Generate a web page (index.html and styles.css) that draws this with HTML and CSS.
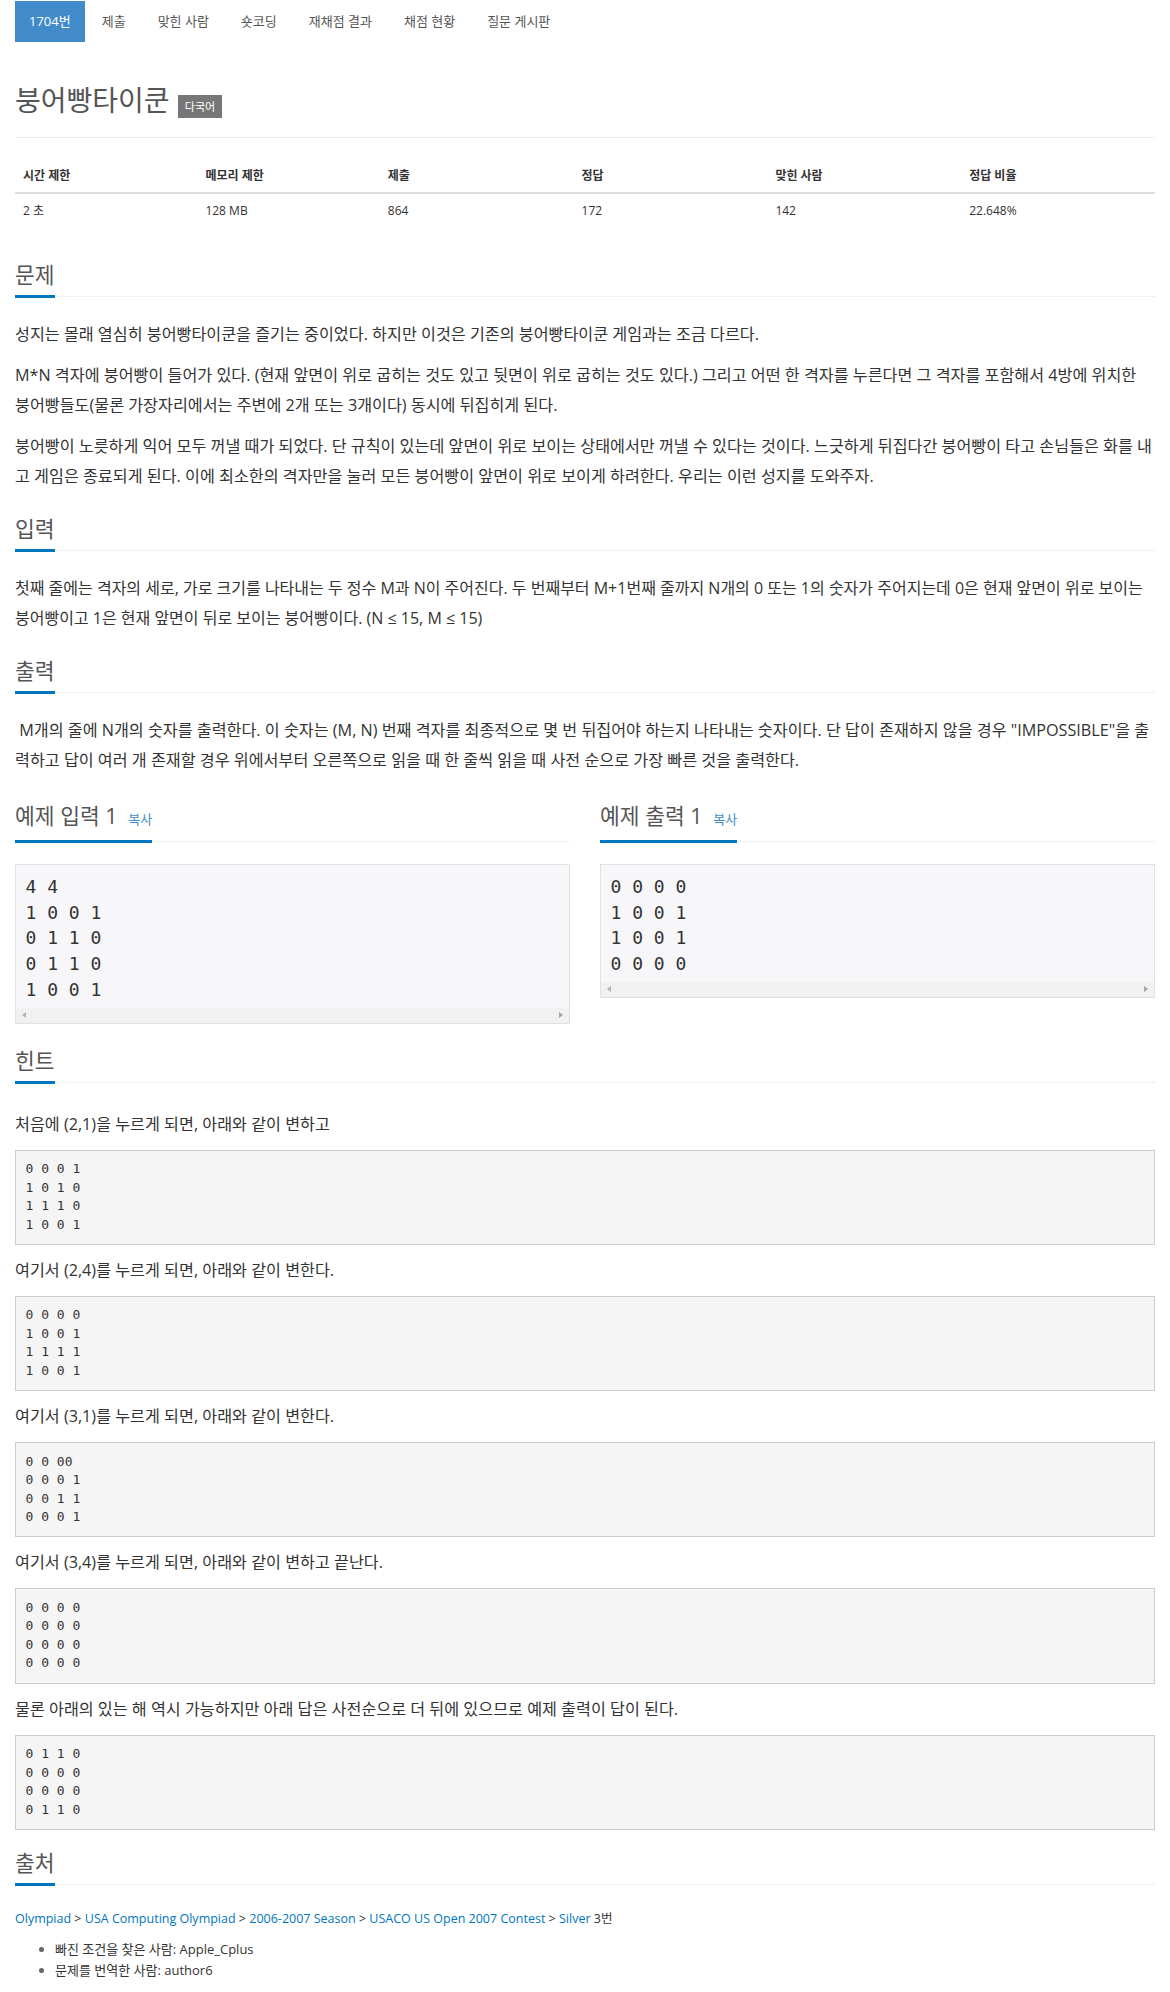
FILE: index.html
```html
<!DOCTYPE html>
<html lang="ko">
<head>
<meta charset="utf-8">
<title>1704번: 붕어빵타이쿤</title>
<link rel="stylesheet" href="styles.css">
</head>
<body>
<div class="container">
  <ul class="nav">
    <li class="active"><a>1704번</a></li>
    <li><a>제출</a></li>
    <li><a>맞힌 사람</a></li>
    <li><a>숏코딩</a></li>
    <li><a>재채점 결과</a></li>
    <li><a>채점 현황</a></li>
    <li><a>질문 게시판</a></li>
  </ul>

  <div class="page-header">
    <h1><span class="title">붕어빵타이쿤</span> <span class="label">다국어</span></h1>
  </div>

  <table class="info">
    <thead>
      <tr><th>시간 제한</th><th>메모리 제한</th><th>제출</th><th>정답</th><th>맞힌 사람</th><th>정답 비율</th></tr>
    </thead>
    <tbody>
      <tr><td>2 초</td><td>128 MB</td><td>864</td><td>172</td><td>142</td><td>22.648%</td></tr>
    </tbody>
  </table>

  <section class="section">
    <div class="headline"><h2>문제</h2></div>
    <div class="problem-text">
      <p>성지는 몰래 열심히 붕어빵타이쿤을 즐기는 중이었다. 하지만 이것은 기존의 붕어빵타이쿤 게임과는 조금 다르다.</p>
      <p>M*N 격자에 붕어빵이 들어가 있다. (현재 앞면이 위로 굽히는 것도 있고 뒷면이 위로 굽히는 것도 있다.) 그리고 어떤 한 격자를 누른다면 그 격자를 포함해서 4방에 위치한 붕어빵들도(물론 가장자리에서는 주변에 2개 또는 3개이다) 동시에 뒤집히게 된다.</p>
      <p>붕어빵이 노릇하게 익어 모두 꺼낼 때가 되었다. 단 규칙이 있는데 앞면이 위로 보이는 상태에서만 꺼낼 수 있다는 것이다. 느긋하게 뒤집다간 붕어빵이 타고 손님들은 화를 내고 게임은 종료되게 된다. 이에 최소한의 격자만을 눌러 모든 붕어빵이 앞면이 위로 보이게 하려한다. 우리는 이런 성지를 도와주자.</p>
    </div>
  </section>

  <section class="section">
    <div class="headline"><h2>입력</h2></div>
    <div class="problem-text">
      <p class="input-text">첫째 줄에는 격자의 세로, 가로 크기를 나타내는 두 정수 M과 N이 주어진다. 두 번째부터 M+1번째 줄까지 N개의 0 또는 1의 숫자가 주어지는데 0은 현재 앞면이 위로 보이는 붕어빵이고 1은 현재 앞면이 뒤로 보이는 붕어빵이다. (N ≤ 15, M ≤ 15)</p>
    </div>
  </section>

  <section class="section">
    <div class="headline"><h2>출력</h2></div>
    <div class="problem-text">
      <p>&nbsp;M개의 줄에 N개의 숫자를 출력한다. 이 숫자는 (M, N) 번째 격자를 최종적으로 몇 번 뒤집어야 하는지 나타내는 숫자이다. 단 답이 존재하지 않을 경우 "IMPOSSIBLE"을 출력하고 답이 여러 개 존재할 경우 위에서부터 오른쪽으로 읽을 때 한 줄씩 읽을 때 사전 순으로 가장 빠른 것을 출력한다.</p>
    </div>
  </section>

  <div class="samples">
    <section class="sample-col">
      <div class="headline sample-headline"><h2>예제 입력 1 <span class="copy">복사</span></h2></div>
      <div class="sample">
        <pre class="sample-data">4 4
1 0 0 1
0 1 1 0
0 1 1 0
1 0 0 1</pre>
        <div class="hscroll"><span class="arrow-left"></span><span class="arrow-right"></span></div>
      </div>
    </section>
    <section class="sample-col">
      <div class="headline sample-headline"><h2>예제 출력 1 <span class="copy">복사</span></h2></div>
      <div class="sample">
        <pre class="sample-data">0 0 0 0
1 0 0 1
1 0 0 1
0 0 0 0</pre>
        <div class="hscroll"><span class="arrow-left"></span><span class="arrow-right"></span></div>
      </div>
    </section>
  </div>

  <section class="section">
    <div class="headline hint-headline"><h2>힌트</h2></div>
    <div class="problem-text">
      <p>처음에 (2,1)을 누르게 되면, 아래와 같이 변하고</p>
      <pre class="hint-pre">0 0 0 1
1 0 1 0
1 1 1 0
1 0 0 1</pre>
      <p>여기서 (2,4)를 누르게 되면, 아래와 같이 변한다.</p>
      <pre class="hint-pre">0 0 0 0
1 0 0 1
1 1 1 1
1 0 0 1</pre>
      <p>여기서 (3,1)를 누르게 되면, 아래와 같이 변한다.</p>
      <pre class="hint-pre">0 0 00
0 0 0 1
0 0 1 1
0 0 0 1</pre>
      <p>여기서 (3,4)를 누르게 되면, 아래와 같이 변하고 끝난다.</p>
      <pre class="hint-pre">0 0 0 0
0 0 0 0
0 0 0 0
0 0 0 0</pre>
      <p>물론 아래의 있는 해 역시 가능하지만 아래 답은 사전순으로 더 뒤에 있으므로 예제 출력이 답이 된다.</p>
      <pre class="hint-pre">0 1 1 0
0 0 0 0
0 0 0 0
0 1 1 0</pre>
    </div>
  </section>

  <section class="section">
    <div class="headline source-headline"><h2>출처</h2></div>
    <p class="source"><a>Olympiad</a> &gt; <a>USA Computing Olympiad</a> &gt; <a>2006-2007 Season</a> &gt; <a>USACO US Open 2007 Contest</a> &gt; <a>Silver</a> 3번</p>
    <ul class="credits">
      <li>빠진 조건을 찾은 사람: Apple_Cplus</li>
      <li>문제를 번역한 사람: author6</li>
    </ul>
  </section>
</div>
</body>
</html>
```

FILE: styles.css
```css
* { box-sizing: border-box; }

html, body {
  margin: 0;
  padding: 0;
  background: #fff;
}

body {
  font-family: "Open Sans", "Noto Sans CJK KR", sans-serif;
  color: #333;
  font-size: 14px;
  line-height: 1.42857;
}

.container {
  width: 1170px;
  padding: 0 15px;
}

/* nav pills */
.nav {
  display: flex;
  list-style: none;
  margin: 1px 0 0;
  padding: 0;
}
.nav li + li { margin-left: 2px; }
.nav a {
  display: block;
  padding: 10px 15px;
  font-size: 13px;
  line-height: 21px;
  color: #555;
}
.nav li.active a {
  padding: 10px 14px;
  background: #428bca;
  color: #fff;
}

/* title */
.page-header {
  margin-top: 42px;
  padding-bottom: 19px;
  border-bottom: 1px solid #eee;
}
.page-header h1 {
  margin: 0;
  font-size: 28px;
  line-height: 33px;
  font-weight: normal;
  color: #555;
}
.label {
  display: inline-block;
  margin-left: 1px;
  padding: 4px 7px;
  font-size: 11px;
  line-height: 15px;
  color: #fff;
  background: #777;
  vertical-align: baseline;
}

/* info table */
.info {
  width: 100%;
  border-collapse: collapse;
  margin: 21px 0 36px;
  font-size: 12px;
  line-height: 17px;
}
.info th, .info td {
  padding: 8px;
  text-align: left;
}
.info th {
  font-weight: bold;
  border-bottom: 2px solid #ddd;
  vertical-align: bottom;
}
.info td { border-top: 1px solid #ddd; }
.info th:nth-child(1), .info th:nth-child(2) { width: 16%; }
.info th:nth-child(n+3) { width: 17%; }

/* headlines */
.headline {
  display: flex;
  margin: 26px 0 22px;
  border-bottom: 1px dotted #dfe4ea;
}
.headline h2 {
  margin: 0 0 -2px;
  padding-bottom: 9px;
  border-bottom: 3px solid #0076c0;
  font-size: 21.5px;
  line-height: 23px;
  font-weight: normal;
  color: #555;
}
.sample-headline { margin-top: 18px; }
.hint-headline { margin-top: 25px; margin-bottom: 26px; }
.source-headline { margin-top: 21px; margin-bottom: 24px; }
.copy {
  margin-left: 5px;
  font-size: 13px;
  color: #428bca;
}

/* problem text */
.problem-text p {
  margin: 0 0 11px;
  font-size: 16.2px;
  line-height: 30px;
}
.problem-text p.input-text { font-size: 16px; }

/* samples */
.samples {
  display: grid;
  grid-template-columns: 1fr 1fr;
  column-gap: 30px;
  align-items: start;
}
.sample {
  border: 1px solid #e1e1e8;
  background: #f7f7f9;
}
.sample-data {
  margin: 0;
  padding: 9px 9.5px 5px;
  font-family: "DejaVu Sans Mono", monospace;
  font-size: 18px;
  line-height: 1.42857;
  color: #333;
}
.hscroll {
  height: 15px;
  background: #f1f1f1;
  display: flex;
  justify-content: space-between;
  align-items: center;
  padding: 0 6px;
}
.arrow-left, .arrow-right {
  width: 0;
  height: 0;
  border-top: 3.5px solid transparent;
  border-bottom: 3.5px solid transparent;
}
.arrow-left { border-right: 4px solid #b3b3b3; }
.arrow-right { border-left: 4px solid #a3a3a3; }

/* hint */
.hint-pre {
  margin: 0 0 10px;
  padding: 9.5px;
  font-family: "DejaVu Sans Mono", monospace;
  font-size: 13px;
  line-height: 1.42857;
  color: #333;
  background: #f5f5f5;
  border: 1px solid #ccc;
}

/* source */
.source {
  margin: 0 0 10px;
  font-size: 12.5px;
  line-height: 20px;
}
.source a { color: #0076c0; }
.credits {
  margin: 0;
  padding-left: 40px;
  font-size: 13px;
  line-height: 21px;
}
.credits li::marker { color: #666; }
```
